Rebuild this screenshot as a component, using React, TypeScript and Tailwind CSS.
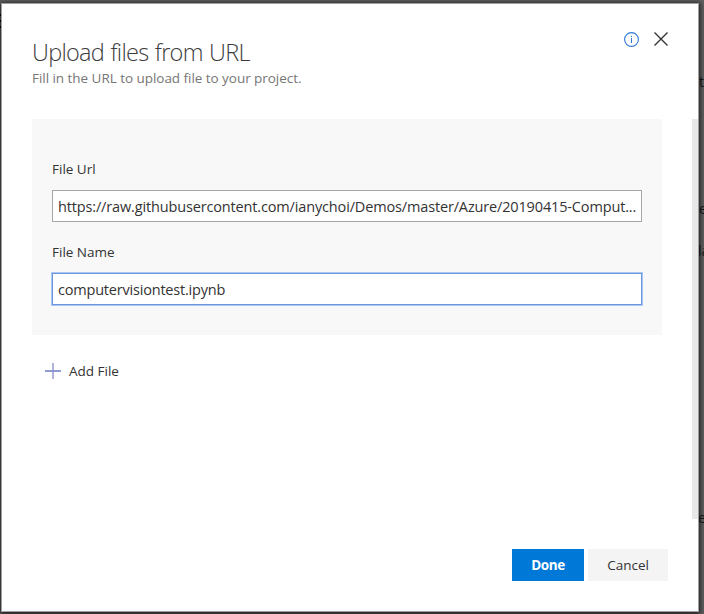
const font = "font-['Open_Sans','Noto_Sans',sans-serif]";

function BackdropText({ className, children }: { className: string; children: string }) {
  return <span className={`absolute text-sm leading-5 text-[#17181b] ${className}`}>{children}</span>;
}

function InfoIcon() {
  return (
    <svg className="mt-px" width="15" height="15" viewBox="0 0 15 15" fill="none" stroke="#2f78d6">
      <circle cx="7.5" cy="7.5" r="6.9" strokeWidth="1.1" />
      <path d="M7.5 6v5" />
      <path d="M7.5 3.8v1.2" />
    </svg>
  );
}

function CloseIcon() {
  return (
    <svg width="14" height="14" viewBox="0 0 14 14" fill="none" stroke="#333" strokeWidth="1.4">
      <path d="M.5.5l13 13M13.5.5l-13 13" />
    </svg>
  );
}

function PlusIcon() {
  return (
    <svg width="16" height="16" viewBox="0 0 16 16" fill="none">
      <path d="M0 8h16" stroke="#8f9bd0" strokeWidth="2" />
      <path d="M8 0v16" stroke="#8d93cf" strokeWidth="1.4" />
    </svg>
  );
}

export default function App() {
  return (
    <div className={`relative h-[614px] w-[704px] overflow-hidden bg-[#606060] pl-px pt-[3px] ${font}`}>
      <BackdropText className="left-[699px] top-[72px]">t</BackdropText>
      <BackdropText className="left-[699px] top-[199px]">e</BackdropText>
      <BackdropText className="left-[698px] top-[241px]">la</BackdropText>
      <BackdropText className="left-[698px] top-[508px]">e</BackdropText>
      <div className="absolute left-0 top-[14px] flex flex-col gap-1">
        <div className="h-0.5 w-px bg-black" />
        <div className="h-0.5 w-px bg-black" />
        <div className="h-0.5 w-px bg-black" />
      </div>
      <div className="relative flex h-[609px] w-[698px] flex-col border border-[#a0a0a0] bg-white shadow-[0_1px_5px_1px_rgba(0,0,0,0.75)]">
        <header className="flex h-[115px] shrink-0 justify-between pl-[30px] pr-[30px] pt-[27px]">
          <div>
            <h1 className="mt-[5px] h-8 whitespace-nowrap text-[23.5px] font-light leading-8 tracking-[-0.72px] [word-spacing:1px] text-[#3c3c3c]">Upload files from URL</h1>
            <p className="h-5 whitespace-nowrap text-[13.5px] leading-5 tracking-[-0.04px] text-[#767676]">Fill in the URL to upload file to your project.</p>
          </div>
          <div className="flex h-4 items-center gap-[15px]">
            <InfoIcon />
            <CloseIcon />
          </div>
        </header>
        <main className="flex h-[400px] shrink-0 justify-between pl-[30px]">
          <div className="w-[630px]">
            <section className="h-[216px] bg-[#f8f8f8] px-5 pt-10 text-[#333]">
              <label className="block h-[31px] text-[13.5px] leading-5">File Url</label>
              <div className="flex h-8 items-center border border-[#a6a6a6] bg-white pl-[5px] pt-0.5 text-[14.5px] tracking-[-0.15px]">
                <span className="whitespace-nowrap">https://raw.githubusercontent.com/ianychoi/Demos/master/Azure/20190415-Comput...</span>
              </div>
              <label className="mt-5 block h-[31px] text-[13.5px] leading-5">File Name</label>
              <div className="flex h-8 items-center border border-[#6d97dc] bg-white pl-[5px] pt-0.5 text-[14.5px] tracking-[-0.2px] shadow-[0_0_0_1px_#a9c6f5]">
                <span className="whitespace-nowrap">computervisiontest.ipynb</span>
              </div>
            </section>
            <button className="ml-[13px] mt-[26px] flex h-5 items-center gap-2 text-[13.5px] leading-5 text-[#333]">
              <PlusIcon />
              <span>Add File</span>
            </button>
          </div>
          <div className="w-[6px] bg-[#e8e8e8]" />
        </main>
        <footer className="flex justify-end gap-1 pr-[30px] pt-[30px] text-[13.5px]">
          <button className="h-8 w-[72px] bg-[#0078d7] font-bold tracking-[-0.4px] text-white">Done</button>
          <button className="h-8 w-20 bg-[#f4f4f4] text-[#333]">Cancel</button>
        </footer>
      </div>
    </div>
  );
}
